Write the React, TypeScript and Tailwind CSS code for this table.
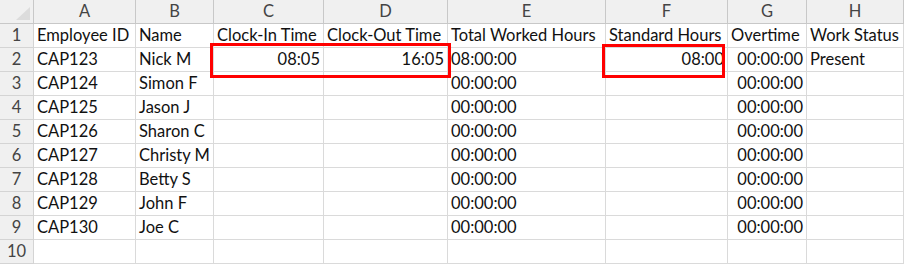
import React from 'react';

const cols = ['A', 'B', 'C', 'D', 'E', 'F', 'G', 'H'];

type Cell = { text: string; right?: boolean };

const rows: Cell[][] = [
  [{ text: 'Employee ID' }, { text: 'Name' }, { text: 'Clock-In Time' }, { text: 'Clock-Out Time' }, { text: 'Total Worked Hours' }, { text: 'Standard Hours' }, { text: 'Overtime' }, { text: 'Work Status' }],
  [{ text: 'CAP123' }, { text: 'Nick M' }, { text: '08:05', right: true }, { text: '16:05', right: true }, { text: '08:00:00' }, { text: '08:00', right: true }, { text: '00:00:00', right: true }, { text: 'Present' }],
  [{ text: 'CAP124' }, { text: 'Simon F' }, { text: '' }, { text: '' }, { text: '00:00:00' }, { text: '' }, { text: '00:00:00', right: true }, { text: '' }],
  [{ text: 'CAP125' }, { text: 'Jason J' }, { text: '' }, { text: '' }, { text: '00:00:00' }, { text: '' }, { text: '00:00:00', right: true }, { text: '' }],
  [{ text: 'CAP126' }, { text: 'Sharon C' }, { text: '' }, { text: '' }, { text: '00:00:00' }, { text: '' }, { text: '00:00:00', right: true }, { text: '' }],
  [{ text: 'CAP127' }, { text: 'Christy M' }, { text: '' }, { text: '' }, { text: '00:00:00' }, { text: '' }, { text: '00:00:00', right: true }, { text: '' }],
  [{ text: 'CAP128' }, { text: 'Betty S' }, { text: '' }, { text: '' }, { text: '00:00:00' }, { text: '' }, { text: '00:00:00', right: true }, { text: '' }],
  [{ text: 'CAP129' }, { text: 'John F' }, { text: '' }, { text: '' }, { text: '00:00:00' }, { text: '' }, { text: '00:00:00', right: true }, { text: '' }],
  [{ text: 'CAP130' }, { text: 'Joe C' }, { text: '' }, { text: '' }, { text: '00:00:00' }, { text: '' }, { text: '00:00:00', right: true }, { text: '' }],
  [{ text: '' }, { text: '' }, { text: '' }, { text: '' }, { text: '' }, { text: '' }, { text: '' }, { text: '' }],
];

export default function App() {
  return (
    <div className="relative w-[904px] h-[266px] overflow-hidden bg-white text-[16.5px] text-[#111]" style={{ fontFamily: 'Lato, "Liberation Sans", sans-serif' }}>
      <div className="grid grid-cols-[34px_102px_78px_110px_124px_158px_122px_79px_97px] auto-rows-[24px]">
        {/* corner */}
        <div className="relative bg-[#f0f0f0] border-r border-b border-[#c8c8c8]">
          <svg className="absolute right-[3px] bottom-[3px]" width="14" height="13" viewBox="0 0 14 13">
            <polygon points="14,0 14,13 0,13" fill="#dcdcdc" />
          </svg>
        </div>
        {cols.map((c) => (
          <div key={c} className="flex items-center justify-center bg-[#f0f0f0] border-r border-b border-[#c8c8c8] text-[#444]">
            {c}
          </div>
        ))}
        {rows.map((row, i) => (
          <React.Fragment key={i}>
            <div className="flex items-center justify-center bg-[#f0f0f0] border-r border-b border-[#d4d4d4] text-[#444]">
              {i + 1}
            </div>
            {row.map((cell, j) => (
              <div
                key={j}
                className={`flex items-center whitespace-nowrap overflow-visible px-[3px] border-r border-b border-[#dadada] ${cell.right ? 'justify-end' : 'justify-start'}`}
              >
                {cell.text}
              </div>
            ))}
          </React.Fragment>
        ))}
      </div>
      <div className="absolute left-[210px] top-[43px] w-[241px] h-[35px] border-[3px] border-[#ff0000]" />
      <div className="absolute left-[602px] top-[44px] w-[123px] h-[34px] border-[3px] border-[#ff0000]" />
    </div>
  );
}
